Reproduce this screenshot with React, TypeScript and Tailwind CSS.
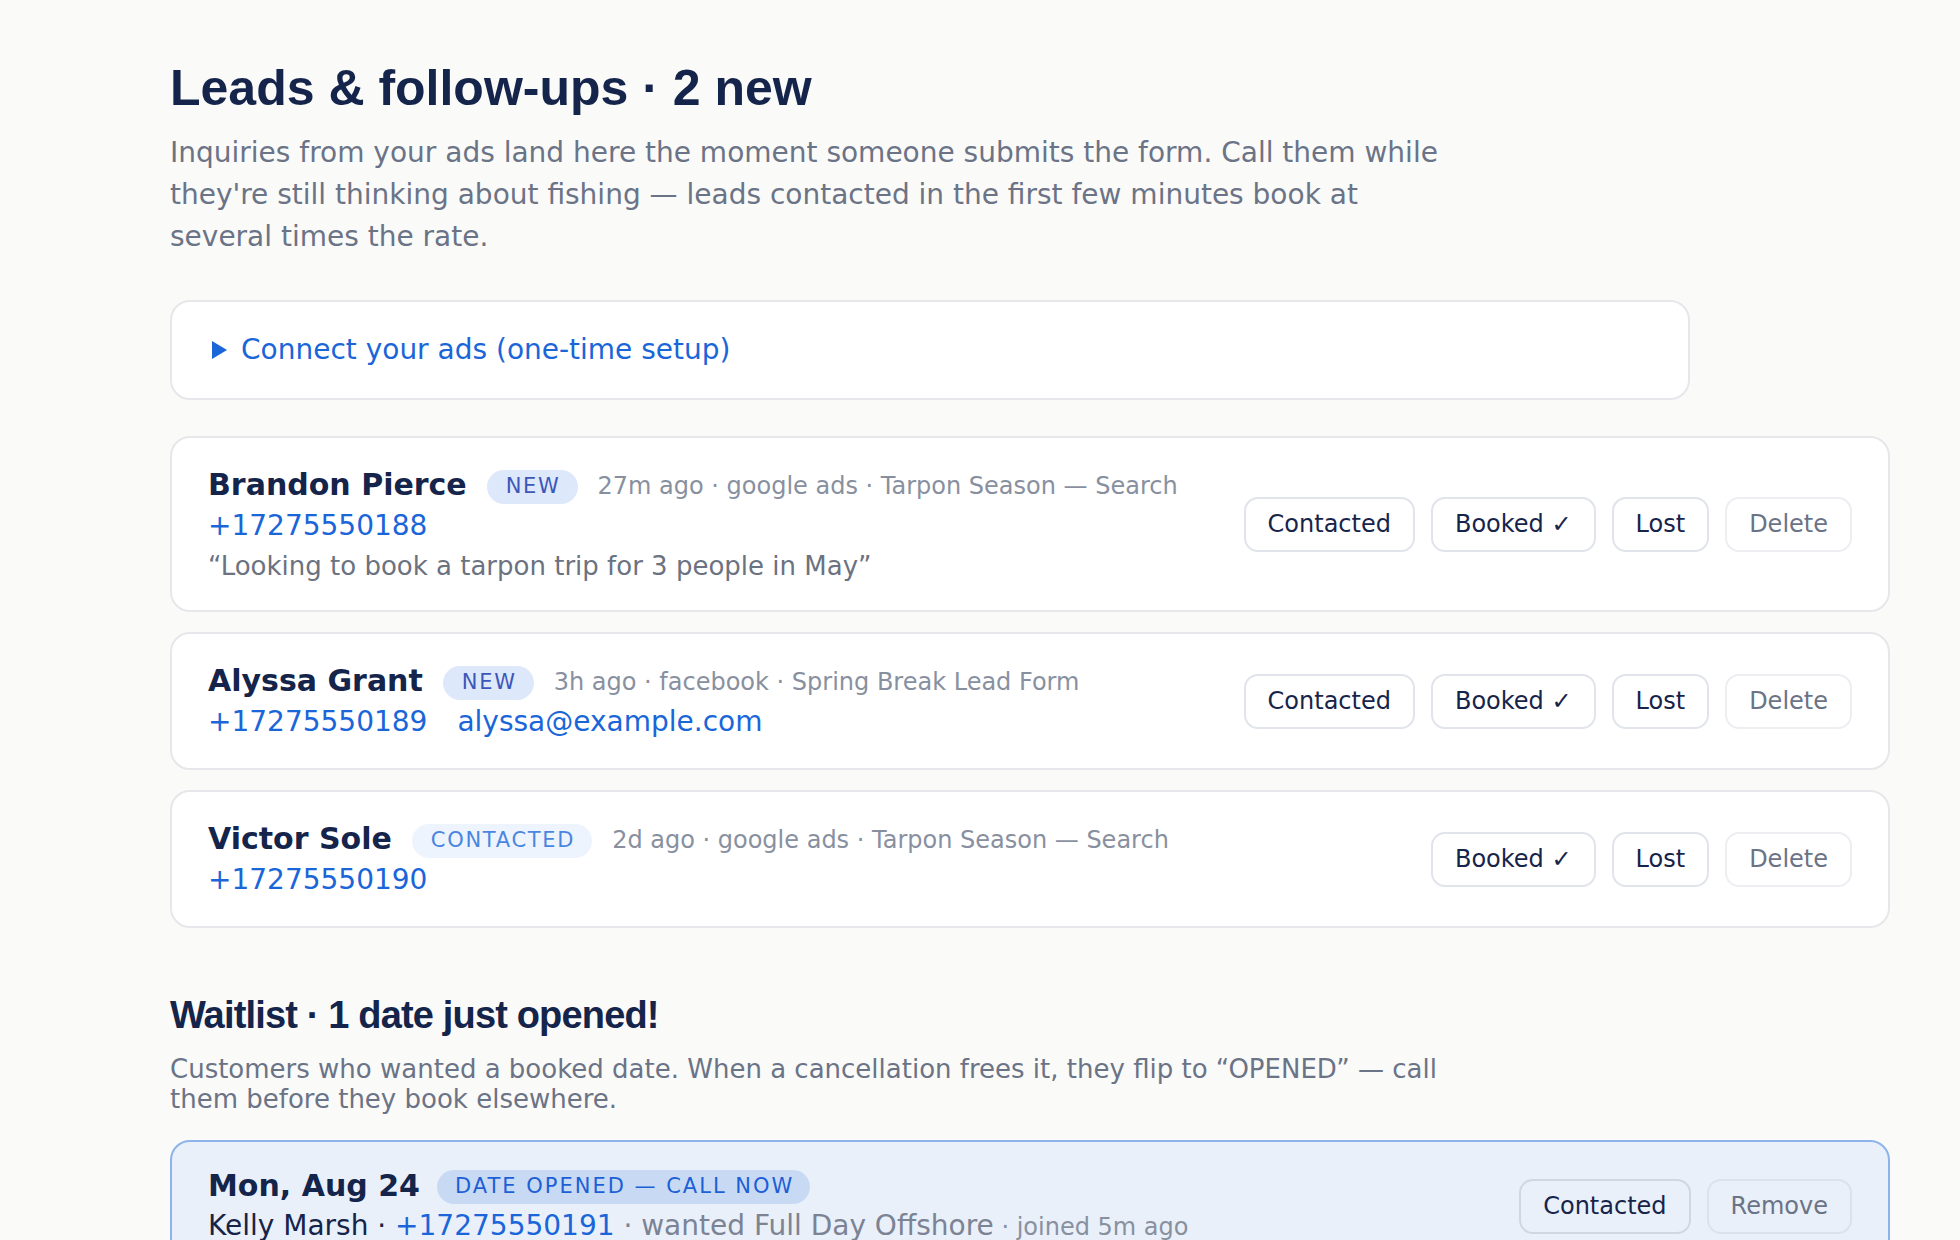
import React from "react";

type Lead = {
  name: string;
  status: "NEW" | "CONTACTED";
  meta: string;
  phone: string;
  email?: string;
  note?: string;
};

const leads: Lead[] = [
  {
    name: "Brandon Pierce",
    status: "NEW",
    meta: "27m ago · google ads · Tarpon Season — Search",
    phone: "+17275550188",
    note: "“Looking to book a tarpon trip for 3 people in May”",
  },
  {
    name: "Alyssa Grant",
    status: "NEW",
    meta: "3h ago · facebook · Spring Break Lead Form",
    phone: "+17275550189",
    email: "alyssa@example.com",
  },
  {
    name: "Victor Sole",
    status: "CONTACTED",
    meta: "2d ago · google ads · Tarpon Season — Search",
    phone: "+17275550190",
  },
];

const body = { fontFamily: '"DejaVu Sans", Verdana, sans-serif' };
const heading = { fontFamily: '"Liberation Sans", Arial, sans-serif' };

function ActionButton({ label, muted }: { label: string; muted?: boolean }) {
  return (
    <button
      className={
        muted
          ? "h-[55px] px-[22px] rounded-[14px] border-2 border-[#eceef2] text-[#6b7386] text-[24px] leading-none whitespace-nowrap bg-transparent"
          : "h-[55px] px-[22px] rounded-[14px] border-2 border-[#e1e4ea] text-[#17244a] text-[24px] leading-none whitespace-nowrap bg-transparent"
      }
    >
      {label}
    </button>
  );
}

function StatusBadge({ status }: { status: Lead["status"] }) {
  return status === "NEW" ? (
    <span className="mt-[5px] inline-flex h-[34px] items-center rounded-full bg-[#dde8fb] pl-[19px] pr-[17px] text-[21px] tracking-[1.7px] text-[#3d57b8]">
      NEW
    </span>
  ) : (
    <span className="mt-[5px] inline-flex h-[34px] items-center rounded-full bg-[#eef4fd] pl-[19px] pr-[17px] text-[21px] tracking-[1.7px] text-[#4a86e0]">
      CONTACTED
    </span>
  );
}

function LeadCard({ lead }: { lead: Lead }) {
  return (
    <div className="flex items-center justify-between rounded-[20px] border-2 border-[#e6e7ea] bg-white pl-[36px] pr-[36px] py-[25px]">
      <div className="flex flex-col">
        <div className="flex h-[42px] items-center gap-[20px]">
          <span className="text-[30px] font-bold text-[#14244a]">{lead.name}</span>
          <StatusBadge status={lead.status} />
          <span className="mt-[3px] text-[24px] text-[#8890a0]">{lead.meta}</span>
        </div>
        <div className="flex h-[42px] items-center gap-[30px] text-[28px] text-[#1a66d9]">
          <span>{lead.phone}</span>
          {lead.email && <span>{lead.email}</span>}
        </div>
        {lead.note && (
          <div className="h-[38px] text-[26px] leading-[38px] text-[#6b7280]">{lead.note}</div>
        )}
      </div>
      <div className="flex items-center gap-[16px]">
        {lead.status === "NEW" && <ActionButton label="Contacted" />}
        <ActionButton label="Booked ✓" />
        <ActionButton label="Lost" />
        <ActionButton label="Delete" muted />
      </div>
    </div>
  );
}

export default function App() {
  return (
    <div className="min-h-screen bg-[#fafaf9] pl-[170px] pr-[70px] pt-[56px]" style={body}>
      <h1 className="text-[50px] font-bold leading-[64px] text-[#14244a]" style={heading}>
        Leads &amp; follow-ups · 2 new
      </h1>
      <p className="mt-[12px] max-w-[1285px] text-[28px] leading-[42px] text-[#6b7386]">
        Inquiries from your ads land here the moment someone submits the form. Call them while
        they're still thinking about fishing — leads contacted in the first few minutes book at
        several times the rate.
      </p>

      <div className="mt-[42px] w-[1520px] rounded-[20px] border-2 border-[#e6e7ea] bg-white px-[40px] py-[27px]">
        <div className="flex h-[42px] items-center gap-[14px] text-[28px] text-[#1a66d9]">
          <svg width="15" height="18" viewBox="0 0 15 18">
            <path d="M0 0 L15 9 L0 18 Z" fill="#1a66d9" />
          </svg>
          <span>Connect your ads (one-time setup)</span>
        </div>
      </div>

      <div className="mt-[36px] flex w-[1720px] flex-col gap-[20px]">
        {leads.map((lead) => (
          <LeadCard key={lead.phone} lead={lead} />
        ))}
      </div>

      <h2
        className="mt-[64px] text-[38px] font-bold leading-[46px] tracking-[-0.022em] text-[#14244a]"
        style={heading}
      >
        Waitlist · 1 date just opened!
      </h2>
      <p className="mt-[16px] max-w-[1285px] text-[26px] leading-[30px] text-[#6b7386]">
        Customers who wanted a booked date. When a cancellation frees it, they flip to “OPENED” — call
        them before they book elsewhere.
      </p>

      <div className="mt-[26px] flex w-[1720px] items-center justify-between rounded-[20px] border-2 border-[#8db4ea] bg-[#e9f0f9] pl-[36px] pr-[36px] pt-[23px] pb-[25px]">
        <div className="flex flex-col">
          <div className="flex h-[40px] items-center gap-[17px]">
            <span className="text-[30px] font-bold text-[#14244a]">Mon, Aug 24</span>
            <span className="mt-[4px] inline-flex h-[34px] items-center rounded-full bg-[#c8daf3] pl-[18px] pr-[16px] text-[21px] tracking-[2px] text-[#1d5fd6]">
              DATE OPENED — CALL NOW
            </span>
          </div>
          <div className="flex h-[42px] items-center whitespace-pre text-[28px]">
            <span className="text-[#17244a]">Kelly Marsh · </span>
            <span className="text-[#1a66d9]">+17275550191</span>
            <span className="text-[#7b8394]"> · wanted Full Day Offshore</span>
            <span className="mt-[2px] text-[24px] text-[#8890a0]"> · joined 5m ago</span>
          </div>
        </div>
        <div className="flex items-center gap-[16px]">
          <button className="h-[55px] px-[22px] rounded-[14px] border-2 border-[#cfd7e3] text-[#17244a] text-[24px] leading-none bg-transparent">
            Contacted
          </button>
          <button className="h-[55px] px-[22px] rounded-[14px] border-2 border-[#dbe2ec] text-[#6b7386] text-[24px] leading-none bg-transparent">
            Remove
          </button>
        </div>
      </div>
    </div>
  );
}
